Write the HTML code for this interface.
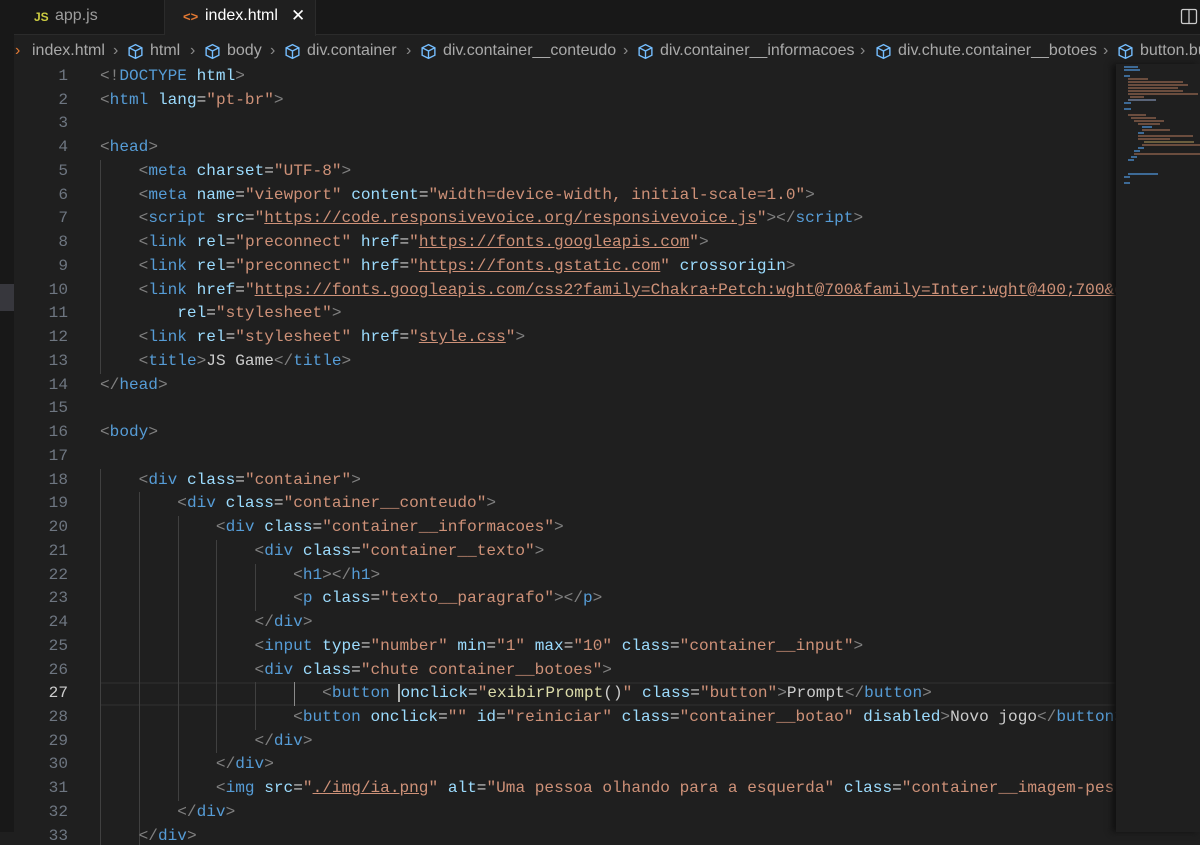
<!DOCTYPE html>
<html><head><meta charset="utf-8"><style>
*{margin:0;padding:0;box-sizing:border-box}
body{width:1200px;height:832px;background:#1f1f1f;overflow:hidden;position:relative;font-family:"Liberation Sans",sans-serif}
.strip{position:absolute;left:0;top:0;width:14px;height:832px;background:#181818}
.strip i{position:absolute;left:0;top:284px;width:14px;height:27px;background:#37373d}
.tabs{position:absolute;left:14px;top:0;width:1186px;height:35px;background:#181818;border-bottom:1px solid #2b2b2b}
.tab{position:absolute;top:0;height:35px;font-size:16px;color:#9d9d9d}
.tab span{position:absolute;top:7px}
.t1{left:0;width:151px;border-right:1px solid #2b2b2b}
.t2{left:151px;width:151px;background:#1f1f1f;color:#fff;height:36px;border-right:1px solid #2b2b2b}
.js{color:#cbcb41;font-weight:bold;font-size:12px;top:10px!important}
.ht{color:#e37933;font-weight:bold;font-size:13px}
.crumbs{position:absolute;left:0;top:38px;width:1200px;height:26px;font-size:16px;color:#a9a9a9;white-space:nowrap}
.crumbs span{position:absolute;top:4px}
.crumbs span.c{color:#8a8a8a}
.crumbs svg{position:absolute;top:5px}
.code{position:absolute;left:0;top:65px;width:1116px;height:780px;overflow:hidden;font-family:"Liberation Mono",monospace;font-size:16.1px}
.ln{position:absolute;left:0;width:68px;text-align:right;color:#6e7681;line-height:23.74px;height:23.74px}
.l{position:absolute;left:100px;white-space:pre;line-height:23.74px;height:23.74px;color:#cccccc}
.g{position:absolute;width:1px;background:#404040}
.p{color:#808080}.t{color:#569cd6}.a{color:#9cdcfe}.s{color:#ce9178}.y{color:#dcdcaa}.w{color:#cccccc}
.u{text-decoration:underline}
.cur{position:absolute;left:100px;width:1016px;height:23.74px;border-top:2px solid #282828;border-bottom:2px solid #282828}
.mini{position:absolute;left:1116px;top:64px;width:84px;height:768px;background:#1f1f1f;box-shadow:-4px 0 6px #111}
.mini div{position:absolute;height:2px}
</style></head><body>
<div class="strip"><i></i></div>
<div class="tabs">
<div class="tab t1"><span class="js" style="left:20px">JS</span><span style="left:41px">app.js</span></div>
<div class="tab t2"><span class="ht" style="left:18px;top:9px">&lt;&gt;</span><span style="left:40px">index.html</span><span style="left:126px;font-size:17px;top:6px">✕</span></div>
<svg style="position:absolute;left:1166px;top:8px" width="18" height="18" viewBox="0 0 18 18"><rect x="1.5" y="1.5" width="15" height="14" rx="1.5" fill="none" stroke="#ccc" stroke-width="1.3"/><line x1="9" y1="2" x2="9" y2="15" stroke="#ccc" stroke-width="1.3"/></svg>
</div>
<div class="crumbs">
<span style="left:15px;color:#e37933">›</span>
<span style="left:32px">index.html</span><span class="c" style="left:113px">›</span>
<svg style="left:127px" width="17" height="17" viewBox="0 0 16 16"><path d="M8 1.5L14 4.5V11.5L8 14.5L2 11.5V4.5Z M2 4.5L8 7.5L14 4.5 M8 7.5V14.5" fill="none" stroke="#75beff" stroke-width="1.3"/></svg>
<span style="left:150px">html</span><span class="c" style="left:190px">›</span>
<svg style="left:204px" width="17" height="17" viewBox="0 0 16 16"><path d="M8 1.5L14 4.5V11.5L8 14.5L2 11.5V4.5Z M2 4.5L8 7.5L14 4.5 M8 7.5V14.5" fill="none" stroke="#75beff" stroke-width="1.3"/></svg>
<span style="left:227px">body</span><span class="c" style="left:270px">›</span>
<svg style="left:284px" width="17" height="17" viewBox="0 0 16 16"><path d="M8 1.5L14 4.5V11.5L8 14.5L2 11.5V4.5Z M2 4.5L8 7.5L14 4.5 M8 7.5V14.5" fill="none" stroke="#75beff" stroke-width="1.3"/></svg>
<span style="left:307px">div.container</span><span class="c" style="left:406px">›</span>
<svg style="left:420px" width="17" height="17" viewBox="0 0 16 16"><path d="M8 1.5L14 4.5V11.5L8 14.5L2 11.5V4.5Z M2 4.5L8 7.5L14 4.5 M8 7.5V14.5" fill="none" stroke="#75beff" stroke-width="1.3"/></svg>
<span style="left:443px">div.container__conteudo</span><span class="c" style="left:623px">›</span>
<svg style="left:637px" width="17" height="17" viewBox="0 0 16 16"><path d="M8 1.5L14 4.5V11.5L8 14.5L2 11.5V4.5Z M2 4.5L8 7.5L14 4.5 M8 7.5V14.5" fill="none" stroke="#75beff" stroke-width="1.3"/></svg>
<span style="left:660px">div.container__informacoes</span><span class="c" style="left:860px">›</span>
<svg style="left:875px" width="17" height="17" viewBox="0 0 16 16"><path d="M8 1.5L14 4.5V11.5L8 14.5L2 11.5V4.5Z M2 4.5L8 7.5L14 4.5 M8 7.5V14.5" fill="none" stroke="#75beff" stroke-width="1.3"/></svg>
<span style="left:898px">div.chute.container__botoes</span><span class="c" style="left:1103px">›</span>
<svg style="left:1117px" width="17" height="17" viewBox="0 0 16 16"><path d="M8 1.5L14 4.5V11.5L8 14.5L2 11.5V4.5Z M2 4.5L8 7.5L14 4.5 M8 7.5V14.5" fill="none" stroke="#75beff" stroke-width="1.3"/></svg>
<span style="left:1140px">button.button</span>
</div>

<div class="code">
<div class="cur" style="top:617.2px"></div>
<div class="g" style="left:100px;top:94.96px;height:213.7px"></div>
<div class="g" style="left:100px;top:403.6px;height:380px"></div>
<div class="g" style="left:139px;top:427.3px;height:356px"></div>
<div class="g" style="left:178px;top:451px;height:284.9px"></div>
<div class="g" style="left:216px;top:474.8px;height:213.7px"></div>
<div class="g" style="left:255px;top:498.5px;height:47.5px"></div>
<div class="g" style="left:255px;top:617.2px;height:47.5px"></div>
<div class="g" style="left:294px;top:617.2px;height:23.74px;background:#8a8a8a"></div>

<div class="ln" style="top:0px">1</div><div class="l" style="top:0px"><span class="p">&lt;!</span><span class="t">DOCTYPE</span> <span class="a">html</span><span class="p">&gt;</span></div>
<div class="ln" style="top:23.74px">2</div><div class="l" style="top:23.74px"><span class="p">&lt;</span><span class="t">html</span> <span class="a">lang</span>=<span class="s">"pt-br"</span><span class="p">&gt;</span></div>
<div class="ln" style="top:47.48px">3</div>
<div class="ln" style="top:71.22px">4</div><div class="l" style="top:71.22px"><span class="p">&lt;</span><span class="t">head</span><span class="p">&gt;</span></div>
<div class="ln" style="top:94.96px">5</div><div class="l" style="top:94.96px">    <span class="p">&lt;</span><span class="t">meta</span> <span class="a">charset</span>=<span class="s">"UTF-8"</span><span class="p">&gt;</span></div>
<div class="ln" style="top:118.7px">6</div><div class="l" style="top:118.7px">    <span class="p">&lt;</span><span class="t">meta</span> <span class="a">name</span>=<span class="s">"viewport"</span> <span class="a">content</span>=<span class="s">"width=device-width, initial-scale=1.0"</span><span class="p">&gt;</span></div>
<div class="ln" style="top:142.44px">7</div><div class="l" style="top:142.44px">    <span class="p">&lt;</span><span class="t">script</span> <span class="a">src</span>=<span class="s">"<span class="u">https://code.responsivevoice.org/responsivevoice.js</span>"</span><span class="p">&gt;&lt;/</span><span class="t">script</span><span class="p">&gt;</span></div>
<div class="ln" style="top:166.18px">8</div><div class="l" style="top:166.18px">    <span class="p">&lt;</span><span class="t">link</span> <span class="a">rel</span>=<span class="s">"preconnect"</span> <span class="a">href</span>=<span class="s">"<span class="u">https://fonts.googleapis.com</span>"</span><span class="p">&gt;</span></div>
<div class="ln" style="top:189.92px">9</div><div class="l" style="top:189.92px">    <span class="p">&lt;</span><span class="t">link</span> <span class="a">rel</span>=<span class="s">"preconnect"</span> <span class="a">href</span>=<span class="s">"<span class="u">https://fonts.gstatic.com</span>"</span> <span class="a">crossorigin</span><span class="p">&gt;</span></div>
<div class="ln" style="top:213.66px">10</div><div class="l" style="top:213.66px">    <span class="p">&lt;</span><span class="t">link</span> <span class="a">href</span>=<span class="s">"<span class="u">https://fonts.googleapis.com/css2?family=Chakra+Petch:wght@700&amp;family=Inter:wght@400;700&amp;display=swap</span>"</span></div>
<div class="ln" style="top:237.4px">11</div><div class="l" style="top:237.4px">        <span class="a">rel</span>=<span class="s">"stylesheet"</span><span class="p">&gt;</span></div>
<div class="ln" style="top:261.14px">12</div><div class="l" style="top:261.14px">    <span class="p">&lt;</span><span class="t">link</span> <span class="a">rel</span>=<span class="s">"stylesheet"</span> <span class="a">href</span>=<span class="s">"<span class="u">style.css</span>"</span><span class="p">&gt;</span></div>
<div class="ln" style="top:284.88px">13</div><div class="l" style="top:284.88px">    <span class="p">&lt;</span><span class="t">title</span><span class="p">&gt;</span>JS Game<span class="p">&lt;/</span><span class="t">title</span><span class="p">&gt;</span></div>
<div class="ln" style="top:308.62px">14</div><div class="l" style="top:308.62px"><span class="p">&lt;/</span><span class="t">head</span><span class="p">&gt;</span></div>
<div class="ln" style="top:332.36px">15</div>
<div class="ln" style="top:356.1px">16</div><div class="l" style="top:356.1px"><span class="p">&lt;</span><span class="t">body</span><span class="p">&gt;</span></div>
<div class="ln" style="top:379.84px">17</div>
<div class="ln" style="top:403.58px">18</div><div class="l" style="top:403.58px">    <span class="p">&lt;</span><span class="t">div</span> <span class="a">class</span>=<span class="s">"container"</span><span class="p">&gt;</span></div>
<div class="ln" style="top:427.32px">19</div><div class="l" style="top:427.32px">        <span class="p">&lt;</span><span class="t">div</span> <span class="a">class</span>=<span class="s">"container__conteudo"</span><span class="p">&gt;</span></div>
<div class="ln" style="top:451.06px">20</div><div class="l" style="top:451.06px">            <span class="p">&lt;</span><span class="t">div</span> <span class="a">class</span>=<span class="s">"container__informacoes"</span><span class="p">&gt;</span></div>
<div class="ln" style="top:474.8px">21</div><div class="l" style="top:474.8px">                <span class="p">&lt;</span><span class="t">div</span> <span class="a">class</span>=<span class="s">"container__texto"</span><span class="p">&gt;</span></div>
<div class="ln" style="top:498.54px">22</div><div class="l" style="top:498.54px">                    <span class="p">&lt;</span><span class="t">h1</span><span class="p">&gt;&lt;/</span><span class="t">h1</span><span class="p">&gt;</span></div>
<div class="ln" style="top:522.28px">23</div><div class="l" style="top:522.28px">                    <span class="p">&lt;</span><span class="t">p</span> <span class="a">class</span>=<span class="s">"texto__paragrafo"</span><span class="p">&gt;&lt;/</span><span class="t">p</span><span class="p">&gt;</span></div>
<div class="ln" style="top:546.02px">24</div><div class="l" style="top:546.02px">                <span class="p">&lt;/</span><span class="t">div</span><span class="p">&gt;</span></div>
<div class="ln" style="top:569.76px">25</div><div class="l" style="top:569.76px">                <span class="p">&lt;</span><span class="t">input</span> <span class="a">type</span>=<span class="s">"number"</span> <span class="a">min</span>=<span class="s">"1"</span> <span class="a">max</span>=<span class="s">"10"</span> <span class="a">class</span>=<span class="s">"container__input"</span><span class="p">&gt;</span></div>
<div class="ln" style="top:593.5px">26</div><div class="l" style="top:593.5px">                <span class="p">&lt;</span><span class="t">div</span> <span class="a">class</span>=<span class="s">"chute container__botoes"</span><span class="p">&gt;</span></div>
<div class="ln" style="top:617.24px;color:#ccc">27</div><div class="l" style="top:617.24px">                       <span class="p">&lt;</span><span class="t">button</span> <span class="a" style="border-left:2px solid #aeafad;margin-left:-1px">onclick</span>=<span class="s">"</span><span class="y">exibirPrompt</span><span class="w">()</span><span class="s">"</span> <span class="a">class</span>=<span class="s">"button"</span><span class="p">&gt;</span>Prompt<span class="p">&lt;/</span><span class="t">button</span><span class="p">&gt;</span></div>
<div class="ln" style="top:640.98px">28</div><div class="l" style="top:640.98px">                    <span class="p">&lt;</span><span class="t">button</span> <span class="a">onclick</span>=<span class="s">""</span> <span class="a">id</span>=<span class="s">"reiniciar"</span> <span class="a">class</span>=<span class="s">"container__botao"</span> <span class="a">disabled</span><span class="p">&gt;</span>Novo jogo<span class="p">&lt;/</span><span class="t">button</span><span class="p">&gt;</span></div>
<div class="ln" style="top:664.72px">29</div><div class="l" style="top:664.72px">                <span class="p">&lt;/</span><span class="t">div</span><span class="p">&gt;</span></div>
<div class="ln" style="top:688.46px">30</div><div class="l" style="top:688.46px">            <span class="p">&lt;/</span><span class="t">div</span><span class="p">&gt;</span></div>
<div class="ln" style="top:712.2px">31</div><div class="l" style="top:712.2px">            <span class="p">&lt;</span><span class="t">img</span> <span class="a">src</span>=<span class="s">"<span class="u">./img/ia.png</span>"</span> <span class="a">alt</span>=<span class="s">"Uma pessoa olhando para a esquerda"</span> <span class="a">class</span>=<span class="s">"container__imagem-pessoa"</span><span class="p">&gt;</span></div>
<div class="ln" style="top:735.94px">32</div><div class="l" style="top:735.94px">        <span class="p">&lt;/</span><span class="t">div</span><span class="p">&gt;</span></div>
<div class="ln" style="top:759.68px">33</div><div class="l" style="top:759.68px">    <span class="p">&lt;/</span><span class="t">div</span><span class="p">&gt;</span></div>
</div>

<div class="mini">
<div style="left:8px;top:2px;width:14px;background:#3d6a96"></div>
<div style="left:8px;top:5px;width:16px;background:#3d6a96"></div>
<div style="left:8px;top:11px;width:6px;background:#3d6a96"></div>
<div style="left:12px;top:14px;width:20px;background:#6b4d3e"></div>
<div style="left:12px;top:17px;width:55px;background:#6b4d3e"></div>
<div style="left:12px;top:20px;width:60px;background:#6b4d3e"></div>
<div style="left:12px;top:23px;width:50px;background:#6b4d3e"></div>
<div style="left:12px;top:26px;width:55px;background:#6b4d3e"></div>
<div style="left:12px;top:29px;width:70px;background:#6b4d3e"></div>
<div style="left:14px;top:32px;width:14px;background:#6b4d3e"></div>
<div style="left:12px;top:35px;width:28px;background:#5a6478"></div>
<div style="left:8px;top:38px;width:7px;background:#3d6a96"></div>
<div style="left:8px;top:44px;width:7px;background:#3d6a96"></div>
<div style="left:12px;top:50px;width:18px;background:#6b4d3e"></div>
<div style="left:15px;top:53px;width:25px;background:#6b4d3e"></div>
<div style="left:18px;top:56px;width:30px;background:#6b4d3e"></div>
<div style="left:22px;top:59px;width:22px;background:#6b4d3e"></div>
<div style="left:26px;top:62px;width:10px;background:#3d6a96"></div>
<div style="left:26px;top:65px;width:28px;background:#6b4d3e"></div>
<div style="left:22px;top:68px;width:6px;background:#3d6a96"></div>
<div style="left:22px;top:71px;width:55px;background:#6b4d3e"></div>
<div style="left:22px;top:74px;width:32px;background:#6b4d3e"></div>
<div style="left:28px;top:77px;width:50px;background:#6b5e3e"></div>
<div style="left:26px;top:80px;width:60px;background:#6b4d3e"></div>
<div style="left:22px;top:83px;width:6px;background:#3d6a96"></div>
<div style="left:18px;top:86px;width:6px;background:#3d6a96"></div>
<div style="left:18px;top:89px;width:66px;background:#6b4d3e"></div>
<div style="left:15px;top:92px;width:6px;background:#3d6a96"></div>
<div style="left:12px;top:95px;width:6px;background:#3d6a96"></div>
<div style="left:12px;top:109px;width:30px;background:#3d6a96"></div>
<div style="left:8px;top:112px;width:6px;background:#3d6a96"></div>
<div style="left:8px;top:118px;width:6px;background:#3d6a96"></div>
</div>
</body></html>
